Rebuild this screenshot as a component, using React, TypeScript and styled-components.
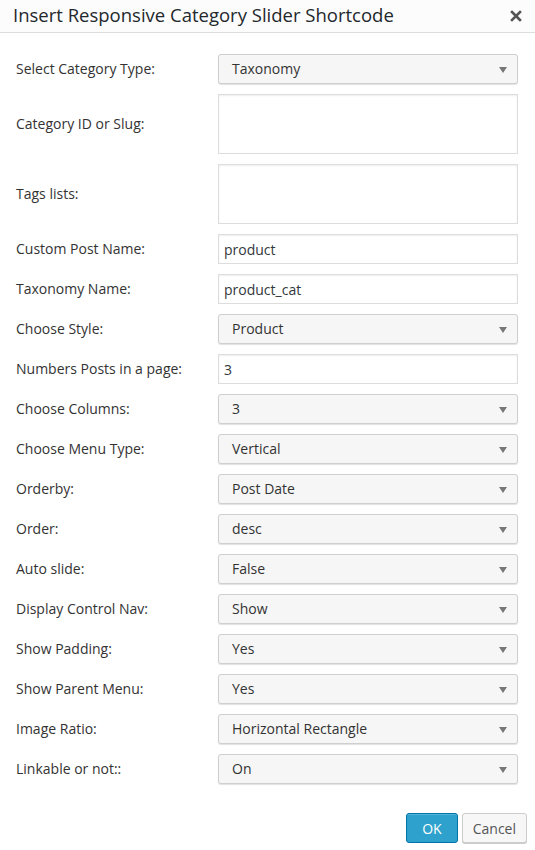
import React from 'react';
import styled, { createGlobalStyle } from 'styled-components';

const GlobalStyle = createGlobalStyle`
  html, body {
    margin: 0;
    padding: 0;
    background: #fff;
  }
  body {
    font-family: 'Open Sans', 'Liberation Sans', sans-serif;
    color: #444;
  }
`;

const Dialog = styled.div`
  width: 535px;
  height: 850px;
  display: flex;
  flex-direction: column;
  background: #fff;
`;

const Header = styled.div`
  height: 33px;
  display: flex;
  align-items: center;
  justify-content: space-between;
  padding: 0 10px 1px 13px;
  background: #fcfcfc;
  border-bottom: 1px solid #dddddd;
  box-sizing: border-box;
`;

const Title = styled.h1`
  margin: 0;
  font-size: 18.5px;
  font-weight: 400;
  color: #23282d;
  line-height: 1;
`;

const Close = styled.button`
  border: none;
  background: none;
  padding: 0;
  width: 18px;
  height: 18px;
  display: flex;
  align-items: center;
  justify-content: center;
  cursor: pointer;
`;

const Form = styled.form`
  display: flex;
  flex-direction: column;
  gap: 10px;
  padding: 21px 18px 0 16px;
`;

const Row = styled.div`
  display: grid;
  grid-template-columns: 202px 300px;
  align-items: center;
`;

const Label = styled.label`
  font-size: 14px;
  color: #333;
  margin-top: -1px;
`;

const TextInput = styled.input`
  box-sizing: border-box;
  width: 300px;
  height: 30px;
  padding: 0 5px;
  border: 1px solid #ddd;
  box-shadow: inset 0 1px 2px rgba(0, 0, 0, 0.07);
  background: #fff;
  font-family: 'Open Sans', 'Liberation Sans', sans-serif;
  font-size: 14px;
  color: #32373c;
  outline: none;
`;

const TextArea = styled.textarea`
  box-sizing: border-box;
  width: 300px;
  height: 60px;
  padding: 5px;
  border: 1px solid #ddd;
  box-shadow: inset 0 1px 2px rgba(0, 0, 0, 0.07);
  background: #fff;
  resize: none;
  font-family: 'Open Sans', 'Liberation Sans', sans-serif;
  font-size: 14px;
  outline: none;
`;

const SelectBox = styled.div`
  box-sizing: border-box;
  width: 300px;
  height: 30px;
  display: flex;
  align-items: center;
  justify-content: space-between;
  padding: 0 10px 1px 13px;
  border: 1px solid #cfcfcf;
  border-radius: 3px;
  background: #f6f6f6;
  box-shadow: 0 1px 1px rgba(0, 0, 0, 0.12);
  font-size: 14px;
  color: #333;
`;

const Arrow = styled.span`
  width: 0;
  height: 0;
  border-left: 4px solid transparent;
  border-right: 4px solid transparent;
  border-top: 6px solid #777;
  margin-top: 3px;
`;

const Footer = styled.div`
  margin-top: auto;
  display: flex;
  justify-content: flex-end;
  gap: 4px;
  padding: 0 8px 7px 0;
`;

const Button = styled.button<{ $primary?: boolean }>`
  height: 30px;
  box-sizing: border-box;
  padding: 0 ${p => (p.$primary ? '15px' : '10px')};
  border-radius: 3px;
  border: 1px solid ${p => (p.$primary ? '#0073aa' : '#ccc')};
  background: ${p => (p.$primary ? '#2ea2cc' : '#f7f7f7')};
  color: ${p => (p.$primary ? '#fff' : '#555')};
  font-family: 'Open Sans', 'Liberation Sans', sans-serif;
  font-size: 14px;
  box-shadow: ${p => (p.$primary ? 'inset 0 1px 0 rgba(120,200,230,0.5)' : '0 1px 0 #ccc')};
`;

type Field =
  | { label: string; kind: 'select'; value: string }
  | { label: string; kind: 'input'; value: string }
  | { label: string; kind: 'area' };

const fields: Field[] = [
  { label: 'Select Category Type:', kind: 'select', value: 'Taxonomy' },
  { label: 'Category ID or Slug:', kind: 'area' },
  { label: 'Tags lists:', kind: 'area' },
  { label: 'Custom Post Name:', kind: 'input', value: 'product' },
  { label: 'Taxonomy Name:', kind: 'input', value: 'product_cat' },
  { label: 'Choose Style:', kind: 'select', value: 'Product' },
  { label: 'Numbers Posts in a page:', kind: 'input', value: '3' },
  { label: 'Choose Columns:', kind: 'select', value: '3' },
  { label: 'Choose Menu Type:', kind: 'select', value: 'Vertical' },
  { label: 'Orderby:', kind: 'select', value: 'Post Date' },
  { label: 'Order:', kind: 'select', value: 'desc' },
  { label: 'Auto slide:', kind: 'select', value: 'False' },
  { label: 'Display Control Nav:', kind: 'select', value: 'Show' },
  { label: 'Show Padding:', kind: 'select', value: 'Yes' },
  { label: 'Show Parent Menu:', kind: 'select', value: 'Yes' },
  { label: 'Image Ratio:', kind: 'select', value: 'Horizontal Rectangle' },
  { label: 'Linkable or not::', kind: 'select', value: 'On' },
];

export default function App() {
  return (
    <Dialog>
      <GlobalStyle />
      <Header>
        <Title>Insert Responsive Category Slider Shortcode</Title>
        <Close aria-label="Close">
          <svg width="12" height="12" viewBox="0 0 12 12">
            <path d="M2 2 L10 10 M10 2 L2 10" stroke="#555" strokeWidth="2.6" strokeLinecap="square" />
          </svg>
        </Close>
      </Header>
      <Form>
        {fields.map(f => (
          <Row key={f.label}>
            <Label>{f.label}</Label>
            {f.kind === 'select' && (
              <SelectBox>
                <span>{f.value}</span>
                <Arrow />
              </SelectBox>
            )}
            {f.kind === 'input' && <TextInput defaultValue={f.value} />}
            {f.kind === 'area' && <TextArea />}
          </Row>
        ))}
      </Form>
      <Footer>
        <Button type="button" $primary>OK</Button>
        <Button type="button">Cancel</Button>
      </Footer>
    </Dialog>
  );
}
